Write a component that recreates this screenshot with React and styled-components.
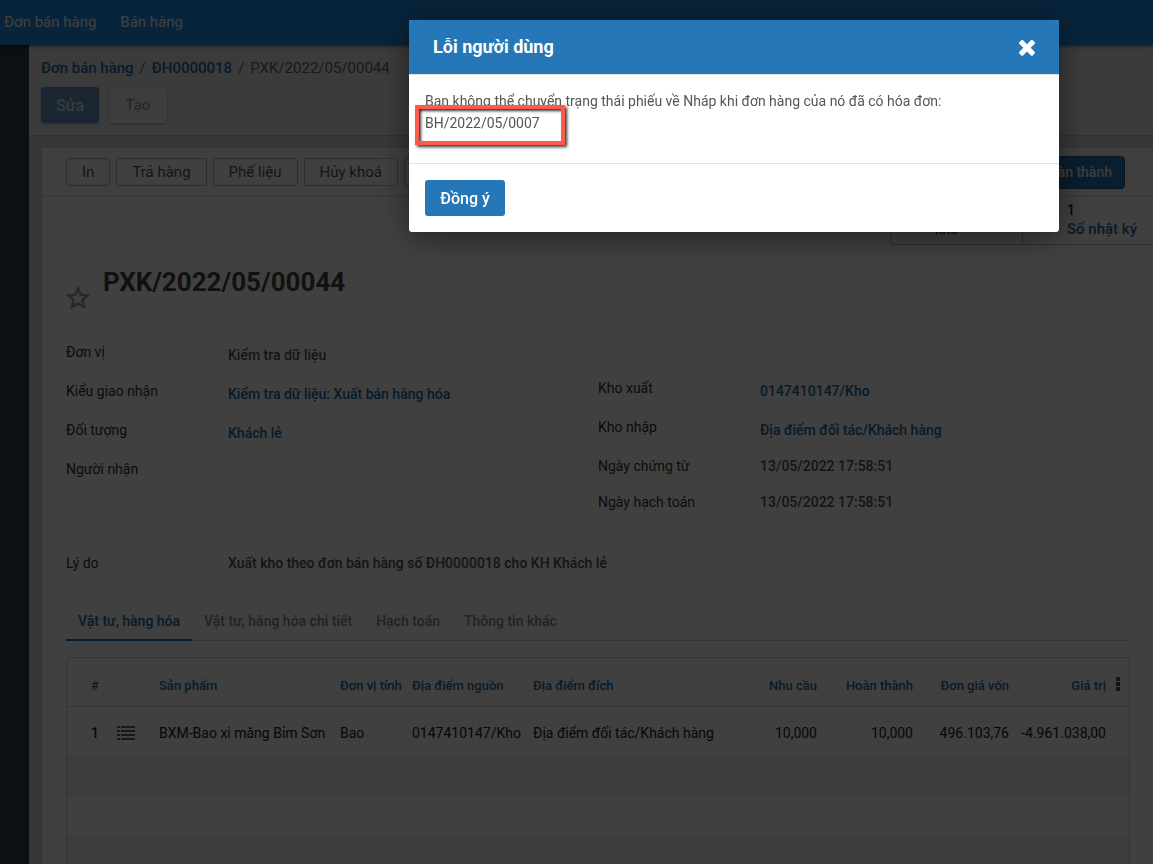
import React from "react";
import styled, { createGlobalStyle } from "styled-components";

const GlobalStyle = createGlobalStyle`
  *, *::before, *::after { box-sizing: border-box; }
  html, body { margin: 0; height: 100%; }
  body {
    font-family: Roboto, "Noto Sans", sans-serif;
    font-size: 14px;
    line-height: 20px;
    color: #212121;
    overflow: hidden;
  }
  button { font-family: inherit; margin: 0; cursor: pointer; }
  a { color: #206ca8; text-decoration: none; font-weight: 500; }
`;

const Page = styled.div`
  display: flex;
  flex-direction: column;
  height: 100vh;
  overflow: hidden;
`;

const NavBar = styled.nav`
  position: relative;
  flex: none;
  display: flex;
  align-items: center;
  gap: 24px;
  height: 45px;
  padding: 0 0 2px 4px;
  background: #2090e8;
  box-shadow: 0 1px 4px rgba(0, 0, 0, 0.6);
`;

const NavLink = styled.a`
  font-size: 15px;
  font-weight: 400;
  color: #fff;
`;

const Columns = styled.div`
  flex: 1;
  display: flex;
  min-height: 0;
`;

const SideBar = styled.aside`
  flex: none;
  width: 29px;
  background: #304048;
`;

const Main = styled.main`
  flex: 1;
  min-width: 0;
  display: flex;
  flex-direction: column;
  background: #dcdce8;
`;

const ControlPanel = styled.header`
  flex: none;
  height: 91px;
  padding: 12px 12px 0;
  background: #ececee;
  border-bottom: 1px solid #c4c4c8;
`;

const Breadcrumb = styled.div`
  display: flex;
  gap: 6px;
  font-size: 15px;
  line-height: 22px;
  color: #666;
`;

const ControlButtons = styled.div`
  display: flex;
  gap: 10px;
  margin-top: 8px;
`;

const ControlButton = styled.button`
  width: 58px;
  height: 36px;
  padding: 0;
  border: 0;
  border-radius: 3px;
  font-size: ${(p) => (p.$primary ? 16 : 15)}px;
  font-weight: ${(p) => (p.$primary ? 500 : 400)};
  color: ${(p) => (p.$primary ? "#e4e8ec" : "#8c8c8c")};
  background: ${(p) => (p.$primary ? "#6494c4" : "#f4f4f4")};
  box-shadow: 0 1px 3px rgba(0, 0, 0, 0.3);
`;

const Sheet = styled.section`
  flex: 1;
  min-height: 0;
  margin: 11px 0 0 12px;
  background: #fff;
  border: solid #d0d0d0;
  border-width: 1px 0 0 1px;
  border-radius: 3px 0 0 0;
`;

const StatusBar = styled.div`
  display: flex;
  align-items: center;
  gap: 6px;
  height: 49px;
  padding: 0 28px 0 24px;
  border-bottom: 1px solid #d4d4d4;
  background: #fafafa;
`;

const StatusButton = styled.button`
  height: 28px;
  padding: 0 15px;
  border: 1px solid #b4b4b4;
  border-radius: 3px;
  background: #fff;
  font-size: 15px;
  color: #555;
`;

const StageButton = styled.button`
  height: 33px;
  margin-left: auto;
  padding: 0 12px;
  border: 1px solid #185888;
  border-radius: 4px;
  background: #2677b7;
  font-size: 14px;
  font-weight: 500;
  color: #f0f0f0;
`;

const StatBox = styled.div`
  display: flex;
  justify-content: flex-end;
  height: 48px;
`;

const StatButton = styled.button`
  display: flex;
  align-items: flex-start;
  justify-content: ${(p) => (p.$first ? "center" : "flex-start")};
  width: ${(p) => (p.$first ? 132 : 131)}px;
  padding: ${(p) => (p.$first ? "4px 24px 0 4px" : "4px 0 0 44px")};
  border: solid #b8b8b8;
  border-width: 0 0 1px 1px;
  border-radius: ${(p) => (p.$first ? "0 0 0 4px" : "0")};
  background: #fff;
  font-size: ${(p) => (p.$first ? 14 : 15)}px;
  font-weight: 500;
  line-height: 19px;
  white-space: nowrap;
  text-align: ${(p) => (p.$first ? "center" : "left")};
  color: ${(p) => (p.$first ? "#444" : "#206ca8")};
`;

const StatValue = styled.span`
  display: block;
  font-size: 14px;
  color: #212121;
`;

const Content = styled.div`
  padding: 0 23px 0 24px;
`;

const TitleRow = styled.div`
  display: flex;
  gap: 12px;
  height: 80px;
  margin-top: 17px;
`;

const StarButton = styled.button`
  width: 25px;
  height: 23px;
  margin-top: 24px;
  padding: 0;
  border: 0;
  background: none;
  color: #999;
  svg { display: block; }
`;

const Title = styled.h1`
  margin: 2px 0 0;
  font-size: 26px;
  line-height: 36px;
  font-weight: 700;
  color: #444;
`;

const FieldColumns = styled.div`
  display: grid;
  grid-template-columns: 1fr 1fr;
  height: 211px;
`;

const FieldList = styled.dl`
  margin: 0;
  padding-top: ${(p) => (p.$lowered ? 36 : 0)}px;
`;

const Field = styled.div`
  display: grid;
  grid-template-columns: 162px 1fr;
  height: ${(p) => (p.$compact ? 36 : 39)}px;
  dt { color: #333; }
  dd {
    margin: 0;
    padding-top: ${(p) => (p.$compact ? 0 : 3)}px;
    white-space: nowrap;
    font-weight: 500;
    color: #555;
  }
`;

const Tabs = styled.div`
  display: flex;
  height: 40px;
  margin-top: 12px;
  border-bottom: 1px solid #d4d4d4;
`;

const Tab = styled.button`
  height: 40px;
  padding: 2px 12px 0;
  border: 0;
  border-bottom: ${(p) => (p.$active ? "2px solid #206ca8" : "2px solid transparent")};
  background: none;
  font-size: 14px;
  font-weight: 500;
  color: ${(p) => (p.$active ? "#206ca8" : "#8a8a8a")};
`;

const TableFrame = styled.div`
  margin-top: 16px;
  border: 1px solid #d4d4d4;
  border-radius: 4px;
`;

const Table = styled.table`
  width: 100%;
  table-layout: fixed;
  border-collapse: collapse;
  th, td { padding: 0 6px; text-align: left; white-space: nowrap; }
  th { height: 48px; padding-top: 8px; font-size: 13px; font-weight: 500; color: #206ca8; }
  thead { border-bottom: 1px solid #d4d4d4; }
  tbody td { height: 40px; }
  tbody tr:first-child td { height: 50px; padding-top: 4px; }
  tbody tr:nth-child(even) { background: #f0f0f0; }
`;

const Col = styled.col`
  width: ${(p) => (p.$w ? `${p.$w}px` : "auto")};
`;

const HeadCell = styled.th`
  && { text-align: ${(p) => p.$align || "left"}; }
`;

const Cell = styled.td`
  && { text-align: ${(p) => p.$align || "left"}; }
  font-weight: ${(p) => (p.$strong ? 500 : 400)};
`;

const IconButton = styled.button`
  display: block;
  padding: 0;
  border: 0;
  background: none;
  color: ${(p) => p.$color || "#666"};
  svg { display: block; }
`;

const KebabCell = styled.th`
  && { padding: 5px 4px 0; }
`;

const Offset = styled.span`
  padding-left: 12px;
`;

const Backdrop = styled.div`
  position: fixed;
  inset: 0;
  display: flex;
  align-items: flex-start;
  justify-content: flex-end;
  padding: 20px 94px 0 20px;
  background: rgba(0, 0, 0, 0.75);
`;

const Dialog = styled.div`
  width: 100%;
  max-width: 650px;
  border-radius: 3px;
  overflow: hidden;
  background: #fff;
  box-shadow: 0 4px 32px rgba(0, 0, 0, 0.5);
`;

const DialogHeader = styled.header`
  display: flex;
  align-items: center;
  justify-content: space-between;
  height: 55px;
  padding: 0 20px 0 24px;
  border-bottom: 1px solid #dee2e6;
  background: #2677b7;
  background-clip: padding-box;
`;

const DialogTitle = styled.h2`
  margin: 0;
  font-size: 18px;
  line-height: 24px;
  font-weight: 700;
  color: #fff;
`;

const DialogBody = styled.div`
  height: 88px;
  padding: 15px 16px;
  line-height: 22px;
  color: #555;
  p { margin: 0; }
`;

const MarkedLine = styled.p`
  position: relative;
`;

const Marker = styled.span`
  position: absolute;
  top: -7px;
  left: -10px;
  width: 150px;
  height: 40px;
  border: 4px solid #ff5a4b;
  box-shadow: 2px 2px 3px rgba(0, 0, 0, 0.8), inset 2px 2px 3px rgba(0, 0, 0, 0.8);
`;

const DialogFooter = styled.footer`
  padding: 16px;
  border-top: 1px solid #dee2e6;
`;

const ConfirmButton = styled.button`
  display: block;
  min-width: 80px;
  height: 36px;
  padding: 0 12px;
  border: 0;
  border-radius: 3px;
  background: #2677b7;
  font-size: 16px;
  font-weight: 500;
  color: #fff;
`;

const leftFields = [
  { label: "Đơn vị", value: "Kiểm tra dữ liệu" },
  { label: "Kiểu giao nhận", value: "Kiểm tra dữ liệu: Xuất bán hàng hóa", link: true },
  { label: "Đối tượng", value: "Khách lẻ", link: true },
  { label: "Người nhận", value: "" },
];

const rightFields = [
  { label: "Kho xuất", value: "0147410147/Kho", link: true },
  { label: "Kho nhập", value: "Địa điểm đối tác/Khách hàng", link: true },
  { label: "Ngày chứng từ", value: "13/05/2022 17:58:51", compact: true },
  { label: "Ngày hạch toán", value: "13/05/2022 17:58:51", compact: true },
];

const reasonFields = [
  { label: "Lý do", value: "Xuất kho theo đơn bán hàng số ĐH0000018 cho KH Khách lẻ", compact: true },
];

const tabs = ["Vật tư, hàng hóa", "Vật tư, hàng hóa chi tiết", "Hạch toán", "Thông tin khác"];

function Fields({ items, lowered }) {
  return (
    <FieldList $lowered={lowered}>
      {items.map((f) => (
        <Field key={f.label} $compact={f.compact}>
          <dt>{f.label}</dt>
          <dd>{f.link ? <a href="#">{f.value}</a> : f.value}</dd>
        </Field>
      ))}
    </FieldList>
  );
}

function StarIcon() {
  return (
    <svg width="24" height="23" viewBox="2 2 20 19" fill="currentColor" stroke="currentColor" strokeWidth="0.3" aria-hidden="true">
      <path d="M22 9.24l-7.19-.62L12 2 9.19 8.63 2 9.24l5.46 4.73L5.82 21 12 17.27 18.18 21l-1.63-7.03L22 9.24zM12 15.4l-3.76 2.27 1-4.28-3.32-2.88 4.38-.38L12 6.1l1.71 4.04 4.38.38-3.32 2.88 1 4.28L12 15.4z" />
    </svg>
  );
}

function ListIcon() {
  return (
    <svg width="18" height="14" viewBox="0 0 18 14" fill="currentColor" aria-hidden="true">
      {[0, 4, 8, 12].map((y) => (
        <path key={y} d={`M0 ${y}h3v2h-3zM4 ${y}h14v2h-14z`} />
      ))}
    </svg>
  );
}

function KebabIcon() {
  return (
    <svg width="4" height="14" viewBox="0 0 4 14" fill="currentColor" aria-hidden="true">
      {[0, 5, 10].map((y) => (
        <rect key={y} y={y} width="4" height="4" rx="0.5" />
      ))}
    </svg>
  );
}

function CloseIcon() {
  return (
    <svg width="24" height="24" viewBox="0 0 1792 1792" fill="currentColor" aria-hidden="true">
      <path d="M1490 1322q0 40-28 68l-136 136q-28 28-68 28t-68-28l-294-294-294 294q-28 28-68 28t-68-28l-136-136q-28-28-28-68t28-68l294-294-294-294q-28-28-28-68t28-68l136-136q28-28 68-28t68 28l294 294 294-294q28-28 68-28t68 28l136 136q28 28 28 68t-28 68l-294 294 294 294q28 28 28 68z" />
    </svg>
  );
}

function ItemsTable() {
  return (
    <TableFrame>
      <Table>
        <colgroup>
          {[44, 42, 181, 72, 121, 0, 96, 96, 96, 97, 17].map((w, i) => (
            <Col key={i} $w={w} />
          ))}
        </colgroup>
        <thead>
          <tr>
            <HeadCell $align="center"><Offset>#</Offset></HeadCell>
            <HeadCell />
            <HeadCell>Sản phẩm</HeadCell>
            <HeadCell>Đơn vị tính</HeadCell>
            <HeadCell>Địa điểm nguồn</HeadCell>
            <HeadCell>Địa điểm đích</HeadCell>
            <HeadCell $align="right">Nhu cầu</HeadCell>
            <HeadCell $align="right">Hoàn thành</HeadCell>
            <HeadCell $align="right">Đơn giá vốn</HeadCell>
            <HeadCell $align="right">Giá trị</HeadCell>
            <KebabCell>
              <IconButton aria-label="Tùy chọn cột" $color="#555"><KebabIcon /></IconButton>
            </KebabCell>
          </tr>
        </thead>
        <tbody>
          <tr>
            <Cell $align="center" $strong><Offset>1</Offset></Cell>
            <Cell>
              <IconButton aria-label="Chi tiết"><ListIcon /></IconButton>
            </Cell>
            <Cell>BXM-Bao xi măng Bỉm Sơn</Cell>
            <Cell>Bao</Cell>
            <Cell>0147410147/Kho</Cell>
            <Cell>Địa điểm đối tác/Khách hàng</Cell>
            <Cell $align="right">10,000</Cell>
            <Cell $align="right">10,000</Cell>
            <Cell $align="right">496.103,76</Cell>
            <Cell $align="right">-4.961.038,00</Cell>
            <Cell />
          </tr>
          {[1, 2, 3].map((n) => (
            <tr key={n}><Cell colSpan={11} /></tr>
          ))}
        </tbody>
      </Table>
    </TableFrame>
  );
}

export default function App() {
  return (
    <>
      <GlobalStyle />
      <Page>
        <NavBar>
          <NavLink href="#">Đơn bán hàng</NavLink>
          <NavLink href="#">Bán hàng</NavLink>
        </NavBar>
        <Columns>
          <SideBar />
          <Main>
            <ControlPanel>
              <Breadcrumb>
                <a href="#">Đơn bán hàng</a>
                <span>/</span>
                <a href="#">ĐH0000018</a>
                <span>/</span>
                <span>PXK/2022/05/00044</span>
              </Breadcrumb>
              <ControlButtons>
                <ControlButton $primary>Sửa</ControlButton>
                <ControlButton>Tạo</ControlButton>
              </ControlButtons>
            </ControlPanel>
            <Sheet>
              <StatusBar>
                <StatusButton>In</StatusButton>
                <StatusButton>Trả hàng</StatusButton>
                <StatusButton>Phế liệu</StatusButton>
                <StatusButton>Hủy khoá</StatusButton>
                <StatusButton>Đặt về nháp</StatusButton>
                <StageButton>Hoàn thành</StageButton>
              </StatusBar>
              <StatBox>
                <StatButton $first>
                  <span>Dịch chuyển<br />kho</span>
                </StatButton>
                <StatButton>
                  <span><StatValue>1</StatValue>Sổ nhật ký</span>
                </StatButton>
              </StatBox>
              <Content>
                <TitleRow>
                  <StarButton aria-label="Đánh dấu"><StarIcon /></StarButton>
                  <Title>PXK/2022/05/00044</Title>
                </TitleRow>
                <FieldColumns>
                  <Fields items={leftFields} />
                  <Fields items={rightFields} lowered />
                </FieldColumns>
                <Fields items={reasonFields} />
                <Tabs role="tablist">
                  {tabs.map((t, i) => (
                    <Tab key={t} role="tab" aria-selected={i === 0} $active={i === 0}>{t}</Tab>
                  ))}
                </Tabs>
                <ItemsTable />
              </Content>
            </Sheet>
          </Main>
        </Columns>
      </Page>
      <Backdrop>
        <Dialog role="dialog" aria-modal="true" aria-labelledby="dialog-title">
          <DialogHeader>
            <DialogTitle id="dialog-title">Lỗi người dùng</DialogTitle>
            <IconButton aria-label="Đóng" $color="#fff"><CloseIcon /></IconButton>
          </DialogHeader>
          <DialogBody>
            <p>Bạn không thể chuyển trạng thái phiếu về Nháp khi đơn hàng của nó đã có hóa đơn:</p>
            <MarkedLine>BH/2022/05/0007<Marker /></MarkedLine>
          </DialogBody>
          <DialogFooter>
            <ConfirmButton>Đồng ý</ConfirmButton>
          </DialogFooter>
        </Dialog>
      </Backdrop>
    </>
  );
}
